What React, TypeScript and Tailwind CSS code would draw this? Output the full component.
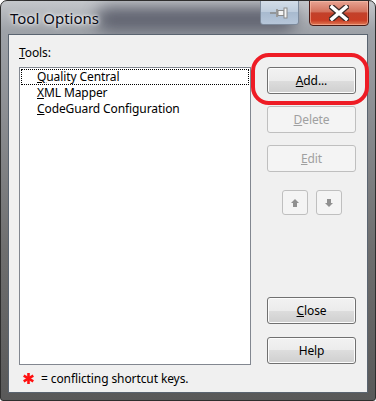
import React from "react";

const font = { fontFamily: '"Noto Sans", "Open Sans", sans-serif' };

function Btn({ children, disabled, className = "" }: { children: React.ReactNode; disabled?: boolean; className?: string }) {
  return (
    <div
      className={
        "flex items-center justify-center rounded-[3px] border text-[12px] tracking-[-0.1px] " +
        (disabled
          ? "border-[#bfbfbf] bg-[#f4f4f4] text-[#a0a0a0]"
          : "border-[#707070] bg-[linear-gradient(to_bottom,#f2f2f2_0%,#ebebeb_50%,#dddddd_50%,#cfcfcf_100%)] text-[#000] shadow-[inset_0_0_0_1px_#fcfcfc]") +
        " " +
        className
      }
    >
      {children}
    </div>
  );
}

function Arrow({ up }: { up?: boolean }) {
  return (
    <svg width="10" height="10" viewBox="0 0 10 10" className={up ? "" : "rotate-180"}>
      <polygon points="5,1 9,5 1,5" fill="#909090" />
      <rect x="3" y="5" width="4" height="4" fill="#909090" />
    </svg>
  );
}

export default function App() {
  return (
    <div className="w-[376px] h-[401px] bg-white" style={font}>
      <div className="relative w-[376px] h-[401px] rounded-t-[7px] rounded-b-[3px] border border-[#2e2e2e] bg-[linear-gradient(to_bottom,#c4c7cb_0px,#9ea2a8_30px,#8a8c90_120px,#6e6e6e_250px,#595959_100%)] overflow-hidden flex flex-col">
        <div className="absolute left-[95px] top-[6px] w-[200px] h-[24px] rounded-full bg-[#4a4d5c] blur-[8px] opacity-80" />
        <div className="relative h-[33px] flex items-start">
          <div className="pl-[9px] pt-[7px] text-[15px] leading-[20px] text-[#0a0a14] [text-shadow:0_0_6px_#ffffff,0_0_3px_#ffffff]" style={{ fontFamily: '"Noto Sans", sans-serif' }}>
            Tool Options
          </div>
          <div className="absolute left-[259px] top-[-1px] w-[39px] h-[25px] rounded-b-[3px] border border-[#7d8a9b] bg-[linear-gradient(to_bottom,#d3dde8_0%,#bccbdc_50%,#a8bacf_50%,#b6c6d9_100%)] flex items-center justify-center">
            <svg width="22" height="12" viewBox="0 0 22 12">
              <line x1="1" y1="6" x2="7" y2="6" stroke="#8a8a8a" strokeWidth="1.5" />
              <rect x="7" y="2" width="2" height="8" fill="#9a9a9a" />
              <polygon points="9,3.5 15,3.5 15,8.5 9,8.5" fill="#f4f4f4" stroke="#8a8a8a" strokeWidth="1" />
              <rect x="15" y="1" width="3" height="10" fill="#f4f4f4" stroke="#8a8a8a" strokeWidth="1" />
            </svg>
          </div>
          <div className="absolute left-[308px] top-[-1px] w-[60px] h-[26px] rounded-b-[4px] border border-[#4a1a14] bg-[linear-gradient(to_bottom,#e8a493_0%,#d3725d_45%,#c2402a_50%,#c93d24_80%,#e07a55_100%)] flex items-center justify-center shadow-[inset_0_0_0_1px_rgba(255,200,180,0.5)]">
            <svg width="20" height="16" viewBox="0 0 20 16">
              <path d="M3 2 L17 14 M17 2 L3 14" stroke="#3a2a28" strokeWidth="6" strokeLinecap="square" />
              <path d="M3 2 L17 14 M17 2 L3 14" stroke="#ffffff" strokeWidth="3.5" strokeLinecap="square" />
            </svg>
          </div>
        </div>
        <div className="relative mx-[7px] h-[359px] border border-[#5a6470] bg-[#f0f0f0] flex">
          <div className="flex flex-col pl-[10px] w-[245px] tracking-[-0.1px]">
            <div className="pt-[10px] h-[32px] text-[12px] leading-[16px] text-black">
              <u>T</u>ools:
            </div>
            <div className="w-[232px] h-[299px] border border-[#828790] bg-white pt-px pl-px text-[12px] leading-[16px] text-black">
              <div className="w-[228px] h-[16px] border border-dotted border-[#000] pl-[15px] leading-[14px]">
                <u>Q</u>uality Central
              </div>
              <div className="pl-[16px]">
                <u>X</u>ML Mapper
              </div>
              <div className="pl-[16px]">
                <u>C</u>odeGuard Configuration
              </div>
            </div>
            <div className="flex items-center h-[27px] pl-[3px] text-[12px] text-black">
              <svg width="13" height="13" viewBox="0 0 13 13" className="mr-[6px]">
                <g stroke="#ff1010" strokeWidth="2.6" strokeLinecap="butt">
                  <line x1="6.5" y1="1" x2="6.5" y2="12" />
                  <line x1="1.7" y1="3.7" x2="11.3" y2="9.3" />
                  <line x1="1.7" y1="9.3" x2="11.3" y2="3.7" />
                </g>
              </svg>
              = conflicting shortcut keys.
            </div>
          </div>
          <div className="flex flex-col pl-[13px] pt-[32px]">
            <Btn className="w-[89px] h-[27px]">
              <span><u>A</u>dd...</span>
            </Btn>
            <Btn disabled className="w-[89px] h-[27px] mt-[12px]">
              <span><u>D</u>elete</span>
            </Btn>
            <Btn disabled className="w-[89px] h-[27px] mt-[12px]">
              <span><u>E</u>dit</span>
            </Btn>
            <div className="flex gap-[8px] pl-[15px] mt-[18px]">
              <Btn disabled className="w-[26px] h-[25px]">
                <Arrow up />
              </Btn>
              <Btn disabled className="w-[26px] h-[25px]">
                <Arrow />
              </Btn>
            </div>
            <Btn className="w-[89px] h-[27px] mt-[82px]">
              <span><u>C</u>lose</span>
            </Btn>
            <Btn className="w-[89px] h-[27px] mt-[13px]">
              <span>Help</span>
            </Btn>
          </div>
          <div className="absolute left-[242px] top-[18px] w-[118px] h-[52px] rounded-[18px] border-[4px] border-[#ee1c25]" />
        </div>
      </div>
    </div>
  );
}
